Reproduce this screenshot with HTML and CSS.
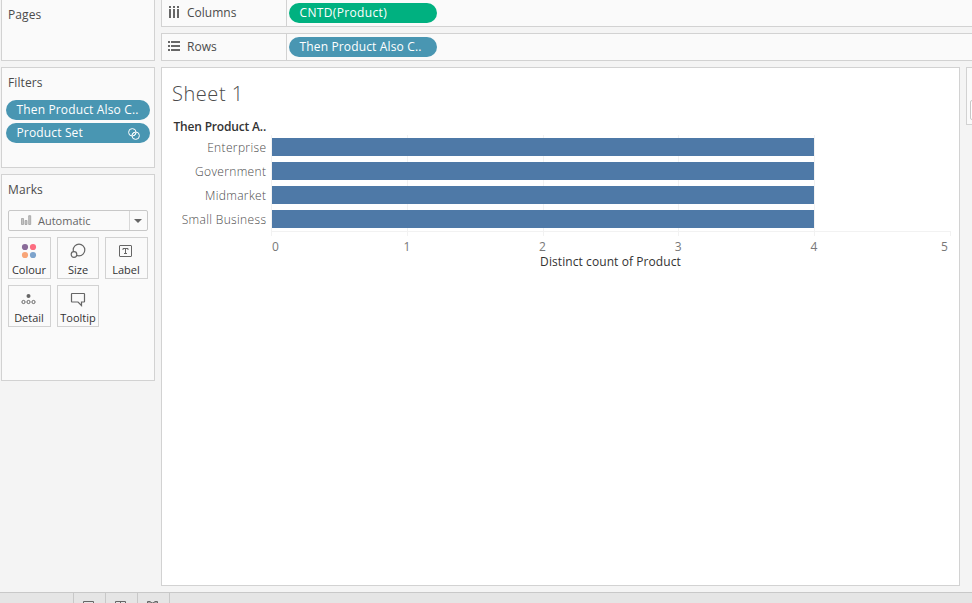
FILE: index.html
```html
<!DOCTYPE html>
<html lang="en">
<head>
<meta charset="utf-8">
<title>Sheet 1</title>
<link rel="stylesheet" href="styles.css">
</head>
<body>
<div class="workspace">
  <aside class="side">
    <section class="card pages"><h2>Pages</h2></section>
    <section class="card filters">
      <h2>Filters</h2>
      <div class="pill blue"><span>Then Product Also C..</span></div>
      <div class="pill blue"><span>Product Set</span>
        <svg class="set-icon" width="12" height="12" viewBox="0 0 12 12" fill="none" stroke="#fff"><circle cx="4.3" cy="4.3" r="3.7"/><circle cx="7.700" cy="7.700" r="3.7"/><path d="M4 6.5 6.5 4M5.500 8 8 5.500" stroke-width=".8"/></svg>
      </div>
    </section>
    <section class="card marks">
      <h2>Marks</h2>
      <div class="select">
        <svg width="11" height="11" viewBox="0 0 11 11" fill="#c4c4c4" stroke="#999" stroke-width=".7"><path d="M.5 3.500h2v6h-2zM4 5.500h2v4H4zM7.700.7h2v8.800h-2z"/></svg>
        <span>Automatic</span>
        <i class="arrow"></i>
      </div>
      <div class="buttons">
        <div class="button"><svg width="20" height="16" viewBox="0 0 20 16"><circle cx="6" cy="4" r="3.1" fill="#8a6b99"/><circle cx="14" cy="4" r="3.1" fill="#fc6d80"/><circle cx="6" cy="12" r="3.1" fill="#f8a578"/><circle cx="14" cy="12" r="3.1" fill="#7da3cc"/></svg><span>Colour</span></div>
        <div class="button even"><svg width="20" height="16" viewBox="0 0 20 16" fill="none" stroke="#666" stroke-width="1.2"><circle cx="11" cy="7" r="5.8"/><circle cx="6" cy="11.5" r="2.8" fill="#fafafa"/></svg><span>Size</span></div>
        <div class="button"><svg width="20" height="16" viewBox="0 0 20 16" fill="none" stroke="#666"><rect x="3.500" y="2.500" width="12" height="11" rx=".5"/><path d="M7 7V5.500h5V7M9.500 5.500v5M8 10.500h3"/></svg><span>Label</span></div>
        <div class="button"><svg width="20" height="16" viewBox="0 0 20 16" fill="none" stroke="#666"><circle cx="9.500" cy="5" r="2" fill="#666" stroke="none"/><circle cx="4.500" cy="11" r="1.6"/><circle cx="9.500" cy="11" r="1.6"/><circle cx="14.500" cy="11" r="1.6"/></svg><span>Detail</span></div>
        <div class="button even"><svg width="20" height="16" viewBox="0 0 20 16" fill="none" stroke="#666" stroke-width="1.2"><path d="M4 2.500h12q.5 0 .5.5v7.500q0 .5-.5.5H13.500v3.500L10 11H4q-.5 0-.5-.5V3q0-.5.5-.5z"/></svg><span>Tooltip</span></div>
      </div>
    </section>
  </aside>
  <main class="main">
    <section class="shelf columns">
      <div class="shelf-name"><svg width="14" height="14" viewBox="0 0 14 14" fill="#666"><path d="M2 0h2v2H2zM6 0h2v2H6zM10 0h2v2h-2zM2 3h2v9H2zM6 3h2v9H6zM10 3h2v9h-2z"/></svg><span>Columns</span></div>
      <div class="pill green"><span class="measure">CNTD(Product)</span></div>
    </section>
    <section class="shelf rows">
      <div class="shelf-name"><svg width="14" height="14" viewBox="0 0 14 14" fill="#666"><path d="M0 1h2v2H0zM0 5h2v2H0zM0 9h2v2H0zM3 1h9v2H3zM3 5h9v2H3zM3 9h9v2H3z"/></svg><span>Rows</span></div>
      <div class="pill blue"><span>Then Product Also C..</span></div>
    </section>
    <div class="canvas">
      <section class="sheet">
        <h1>Sheet 1</h1>
        <div class="chart">
          <div class="names">
            <div class="field">Then Product A..</div>
            <div>Enterprise</div>
            <div>Government</div>
            <div>Midmarket</div>
            <div>Small Business</div>
          </div>
          <div class="plot">
            <svg class="grid" width="680" height="101" shape-rendering="crispEdges" stroke="#f2f2f2"><path d="M.5 0v101M136.500 0v101M272.500 0v101M407.500 0v101M543.500 0v101M679.500 96v5M0 96.500h680"/></svg>
            <div class="bars"><i></i><i></i><i></i><i></i></div>
            <div class="ticks"><span>0</span><span>1</span><span>2</span><span>3</span><span>4</span><span>5</span></div>
            <div class="axis-title">Distinct count of Product</div>
          </div>
        </div>
      </section>
      <section class="legend"><i></i></section>
    </div>
  </main>
</div>
<footer class="tabs">
  <div class="status"></div>
  <div class="tab"><svg width="14" height="12" viewBox="0 0 14 12" fill="none" stroke="#666"><path d="M1.500 11V1.500h10V11"/></svg></div>
  <div class="tab"><svg width="14" height="12" viewBox="0 0 14 12" fill="none" stroke="#666"><path d="M1.500 11V1.500h10V11M6.500 1v10M1 4.500h11"/></svg></div>
  <div class="tab"><svg width="14" height="12" viewBox="0 0 14 12" fill="none" stroke="#666"><path d="M1.500 11V1.500L4 1.500l2.500 2 2.500-2h2.500V11M2 3h9"/></svg></div>
</footer>
</body>
</html>
```
FILE: styles.css
```css
* { box-sizing: border-box; }
body { margin: 0; width: 972px; height: 603px; overflow: hidden; background: #f4f4f4; color: #4b4b4b; font: 12px/16px "Open Sans", "Noto Sans", sans-serif; }
span { white-space: nowrap; }
h1, h2 { margin: 0; font-weight: 400; }
svg { display: block; flex: none; }
.workspace { display: flex; gap: 6px; height: 592px; padding-left: 1px; }
.side { width: 154px; flex: none; display: flex; flex-direction: column; gap: 6px; }
.card { border: 1px solid #d2d2d2; background: #fafafa; }
.card h2 { font-size: 12px; line-height: 16px; padding: 7px 0 0 6px; letter-spacing: .1px; }
.pages { height: 61px; border-top: 0; }
.filters { height: 101px; }
.marks { height: 207px; }
.pill { width: 148px; height: 20px; border-radius: 10px; color: #fff; display: flex; align-items: center; padding: 0 10px 1px 10.5px; font-weight: 500; letter-spacing: .15px; }
.measure { letter-spacing: .35px; }
.blue { background: #4996b2; }
.green { background: #00b180; }
.filters .pill { width: 144px; margin: 0 0 3px 4px; }
.filters h2 { margin-bottom: 9px; }
.set-icon { margin-left: auto; margin-right: .5px; position: relative; top: 1px; }
.select { display: flex; align-items: center; width: 140px; height: 21px; margin: 12px 0 6px 6px; border: 1px solid #c8c8c8; border-radius: 2px; color: #666; font-size: 11px; }
.select svg { margin: 0 6px 0 12px; }
.arrow { margin-left: auto; width: 18px; height: 19px; border-left: 1px solid #d8d8d8; display: flex; align-items: center; justify-content: center; }
.arrow::after { content: ""; border: 4px solid transparent; border-top-color: #666; border-bottom: 0; margin-right: 1px; }
.buttons { display: grid; grid-template-columns: 43px 42px 43px; grid-auto-rows: 42px; gap: 6px; margin-left: 6px; }
.button { border: 1px solid #d2d2d2; display: flex; flex-direction: column; align-items: center; padding: 5px 1px 0 0; color: #333; font-size: 11px; }
.button.even { padding-right: 0; }
.button span { margin-top: 3px; }
.main { flex: 1; min-width: 0; display: flex; flex-direction: column; }
.shelf { display: flex; align-items: center; border: 1px solid #d2d2d2; border-right: 0; background: #fafafa; margin-bottom: 6px; }
.columns { height: 27px; border-top: 0; }
.rows { height: 28px; }
.shelf-name { width: 125px; align-self: stretch; border-right: 1px solid #d2d2d2; display: flex; align-items: center; padding-left: 6px; gap: 5px; margin-right: 2px; }
.columns svg { margin-left: -1px; margin-right: 1px; }
.canvas { display: flex; gap: 6px; }
.sheet { width: 799px; height: 519px; flex: none; border: 1px solid #d2d2d2; background: #fff; }
.sheet h1 { font-size: 20px; line-height: 30px; font-weight: 300; padding: 11px 0 0 10px; letter-spacing: .55px; }
.chart { display: flex; margin-top: 10px; }
.names { width: 104px; text-align: right; color: #4b4b4b; line-height: 26px; font-weight: 300; letter-spacing: .35px; }
.names div { height: 24px; margin-right: -.35px; }
.names .field { height: 16px; line-height: 16px; color: #333; font-weight: 600; letter-spacing: -.18px; margin-right: 0; }
.plot { width: 680px; margin: 16px 0 0 5px; position: relative; }
.grid { position: absolute; left: 0; top: 0; }
.bars { position: relative; display: grid; gap: 6px; padding: 3px 0 0 1px; }
.bars i { width: 542px; height: 18px; background: #4e79a7; }
.ticks { display: grid; grid-template-columns: 68px repeat(4, 135.7px) 68px; margin-top: 12px; color: #787878; text-align: center; line-height: 14px; }
.ticks span:first-child { text-align: left; padding-left: 1px; }
.ticks span:last-child { text-align: right; padding-right: 2px; }
.axis-title { text-align: center; line-height: 14px; margin-top: 1px; padding-right: 1px; color: #333; font-weight: 500; letter-spacing: .08px; }
.legend { width: 8px; height: 58px; border: 1px solid #d2d2d2; background: #fafafa; padding: 32px 0 0 3px; }
.legend i { display: block; width: 8px; height: 20px; border: 1px solid #c8c8c8; border-radius: 2px; background: #fff; }
.tabs { height: 11px; border-top: 1px solid #c8c8c8; background: #e5e5e5; display: flex; }
.status { width: 74px; border-right: 1px solid #c8c8c8; }
.tab { width: 32px; border-right: 1px solid #c8c8c8; padding: 7px 0 0 8px; overflow: hidden; }
```
